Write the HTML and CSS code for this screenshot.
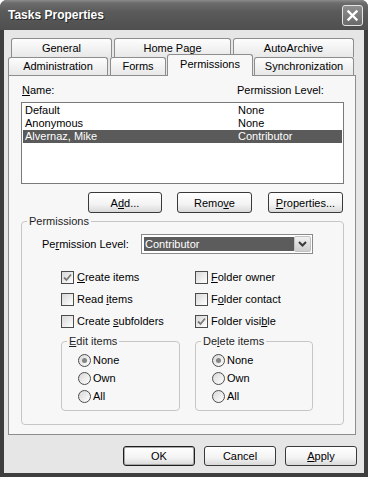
FILE: index.html
```html
<!DOCTYPE html>
<html lang="en">
<head>
    <meta charset="UTF-8">
    <meta name="viewport" content="width=device-width, initial-scale=1.0">
    <title>Tasks Properties</title>
    <link rel="stylesheet" href="styles.css">
</head>
<body>
    <div class="window">
        <div class="titlebar">
            <span class="title">Tasks Properties</span>
            <span class="close-btn">
                <svg width="13" height="13" viewBox="0 0 13 13"><path d="M2.5 2.5 L10.5 10.5 M10.5 2.5 L2.5 10.5" stroke="#fff" stroke-width="2.4" stroke-linecap="square"/></svg>
            </span>
        </div>
        <div class="client">
            <div class="tab-row back-row">
                <div class="tab tab-general">General</div>
                <div class="tab tab-home">Home Page</div>
                <div class="tab tab-archive">AutoArchive</div>
            </div>
            <div class="tab-row front-row">
                <div class="tab tab-admin">Administration</div>
                <div class="tab tab-forms">Forms</div>
                <div class="tab tab-perm selected">Permissions</div>
                <div class="tab tab-sync">Synchronization</div>
            </div>
            <div class="panel">
                <div class="list-header">
                    <span><u>N</u>ame:</span>
                    <span>Permission Level:</span>
                </div>
                <div class="listbox">
                    <div class="list-row"><span>Default</span><span>None</span></div>
                    <div class="list-row"><span>Anonymous</span><span>None</span></div>
                    <div class="list-row selected"><span>Alvernaz, Mike</span><span>Contributor</span></div>
                </div>
                <div class="list-buttons">
                    <button class="btn btn-add">A<u>d</u>d...</button>
                    <button class="btn btn-remove">Remo<u>v</u>e</button>
                    <button class="btn btn-props"><u>P</u>roperties...</button>
                </div>

                <fieldset class="group perms">
                    <legend>Permissions</legend>
                    <div class="level-row">
                        <span class="level-label">Pe<u>r</u>mission Level:</span>
                        <div class="combo">
                            <span class="combo-value">Contributor</span>
                            <span class="combo-arrow">
                                <svg width="9" height="6" viewBox="0 0 9 6"><polyline points="1,1 4.5,4.5 8,1" fill="none" stroke="#3a3a3a" stroke-width="2"/></svg>
                            </span>
                        </div>
                    </div>

                    <div class="check-grid">
                        <div class="check-item">
                            <span class="box"><svg width="9" height="9" viewBox="0 0 9 9"><polyline points="1,4.5 3.5,7 8,1.5" fill="none" stroke="#7a7a7a" stroke-width="1.8"/></svg></span>
                            <span><u>C</u>reate items</span>
                        </div>
                        <div class="check-item">
                            <span class="box"></span>
                            <span><u>F</u>older owner</span>
                        </div>
                        <div class="check-item">
                            <span class="box"></span>
                            <span>Read <u>i</u>tems</span>
                        </div>
                        <div class="check-item">
                            <span class="box"></span>
                            <span>F<u>o</u>lder contact</span>
                        </div>
                        <div class="check-item">
                            <span class="box"></span>
                            <span>Create <u>s</u>ubfolders</span>
                        </div>
                        <div class="check-item">
                            <span class="box"><svg width="9" height="9" viewBox="0 0 9 9"><polyline points="1,4.5 3.5,7 8,1.5" fill="none" stroke="#7a7a7a" stroke-width="1.8"/></svg></span>
                            <span>Folder visi<u>b</u>le</span>
                        </div>
                    </div>

                    <div class="sub-groups">
                        <fieldset class="group sub sub-edit">
                            <legend><u>E</u>dit items</legend>
                            <div class="radios">
                                <div class="radio-item"><span class="radio on"></span><span>None</span></div>
                                <div class="radio-item"><span class="radio"></span><span>Own</span></div>
                                <div class="radio-item"><span class="radio"></span><span>All</span></div>
                            </div>
                        </fieldset>
                        <fieldset class="group sub sub-delete">
                            <legend>De<u>l</u>ete items</legend>
                            <div class="radios">
                                <div class="radio-item"><span class="radio on"></span><span>None</span></div>
                                <div class="radio-item"><span class="radio"></span><span>Own</span></div>
                                <div class="radio-item"><span class="radio"></span><span>All</span></div>
                            </div>
                        </fieldset>
                    </div>
                </fieldset>
            </div>

            <div class="dialog-buttons">
                <button class="btn btn-dlg default">OK</button>
                <button class="btn btn-dlg">Cancel</button>
                <button class="btn btn-dlg"><u>A</u>pply</button>
            </div>
        </div>
    </div>
</body>
</html>
```

FILE: styles.css
```css
* {
    box-sizing: border-box;
}
body {
    margin: 0;
    background: #fff;
    font-family: "Liberation Sans", Arial, sans-serif;
    font-size: 11px;
    color: #000;
}
u {
    text-underline-offset: 1px;
}
.window {
    width: 368px;
    height: 477px;
    background: #3e3e3e;
    border-radius: 7px 7px 0 0;
    overflow: hidden;
    display: flex;
    flex-direction: column;
}
.titlebar {
    height: 30px;
    flex: none;
    display: flex;
    align-items: center;
    justify-content: space-between;
    padding: 0 5px 0 8px;
    background: linear-gradient(#8c8c8c 0, #6c6c6c 3px, #5a5a5a 12px, #4f4f4f 100%);
}
.title {
    color: #fff;
    font-weight: bold;
    font-size: 12px;
    text-shadow: 1px 1px 0 #262626;
}
.close-btn {
    width: 21px;
    height: 21px;
    border: 1px solid #e4e4e4;
    border-radius: 3px;
    background: linear-gradient(#8e8e8e, #6a6a6a);
    display: flex;
    align-items: center;
    justify-content: center;
}
.client {
    flex: 1;
    margin: 0 4px 4px;
    padding-top: 8px;
    background: #e6e6e6;
}

/* tabs */
.tab-row {
    display: flex;
}
.back-row {
    height: 19px;
    padding-left: 7px;
    gap: 2px;
}
.front-row {
    height: 18px;
    padding-left: 4px;
    align-items: flex-end;
}
.tab {
    height: 100%;
    border: 1px solid #8d8d8d;
    border-bottom: none;
    border-radius: 3px 3px 0 0;
    background: linear-gradient(#fdfdfd, #e8e8e8);
    text-align: center;
    line-height: 13px;
    padding-top: 3px;
}
.front-row .tab {
    padding-top: 2px;
}
.tab-general { width: 101px; }
.tab-home { width: 117px; }
.tab-archive { width: 121px; }
.tab-admin { width: 100px; }
.tab-forms { width: 56px; margin-left: 2px; }
.tab-perm { width: 86px; margin-left: 1px; }
.tab-sync { width: 100px; margin-left: 1px; }
.front-row .tab.selected {
    height: 22px;
    margin-bottom: -1px;
    padding-top: 3px;
    background: #f7f7f7;
    position: relative;
    z-index: 1;
}

/* tab page */
.panel {
    margin-left: 4px;
    width: 348px;
    border: 1px solid #8d8d8d;
    background: #f7f7f7;
    padding: 8px 11px 9px 12px;
}
.list-header {
    display: grid;
    grid-template-columns: 215px 1fr;
    padding-left: 1px;
    line-height: 13px;
}
.listbox {
    margin-top: 5px;
    height: 82px;
    border: 1px solid #7a7a7a;
    background: #fff;
    padding: 1px;
}
.list-row {
    display: grid;
    grid-template-columns: 213px 1fr;
    padding-left: 2px;
    height: 13px;
    line-height: 13px;
}
.list-row.selected {
    background: #5a5a5a;
    color: #fff;
}
.list-buttons {
    margin-top: 8px;
    display: flex;
    justify-content: flex-end;
    padding-right: 1px;
}
.btn {
    height: 21px;
    padding: 0;
    border: 1px solid #3a3a3a;
    border-radius: 3px;
    background: linear-gradient(#fff, #f3f3f3 60%, #d9d9d9);
    font-family: inherit;
    font-size: 11px;
    color: #000;
}
.btn-add { width: 74px; }
.btn-remove { width: 75px; margin-left: 15px; }
.btn-props { width: 75px; margin-left: 16px; }

/* group boxes */
.group {
    margin: 0;
    padding: 0;
    min-width: 0;
    border: 1px solid #c6c6c6;
    border-radius: 4px;
}
.group legend {
    margin-left: 5px;
    padding: 0 2px;
    line-height: 13px;
    color: #1e1e1e;
}
.perms {
    margin-top: 2px;
    padding-bottom: 13px;
}
.level-row {
    display: flex;
    align-items: center;
    margin-top: 6px;
    padding-left: 20px;
}
.level-label {
    width: 99px;
}
.combo {
    width: 172px;
    height: 20px;
    border: 1px solid #8a8a8a;
    background: #fff;
    padding: 1px;
    display: flex;
}
.combo-value {
    flex: 1;
    margin: 1px 0 1px 1px;
    padding-left: 1px;
    background: #5c5c5c;
    color: #fff;
    line-height: 14px;
}
.combo-arrow {
    width: 17px;
    border: 1px solid #c2c2c2;
    border-radius: 2px;
    background: linear-gradient(#f0f0f0, #cdcdcd);
    display: flex;
    align-items: center;
    justify-content: center;
}
.check-grid {
    display: grid;
    grid-template-columns: 134px 1fr;
    grid-auto-rows: 22px;
    margin-top: 12px;
    padding-left: 39px;
}
.check-item {
    display: flex;
    align-items: center;
    gap: 3px;
}
.box {
    width: 13px;
    height: 13px;
    border: 1px solid #4c4c4c;
    background: linear-gradient(135deg, #d8d8d8, #fff);
    display: flex;
    align-items: center;
    justify-content: center;
}
.sub-groups {
    display: grid;
    grid-template-columns: 134px 118px;
    margin-top: 3px;
    padding-left: 39px;
}
.sub-edit { width: 119px; }
.sub-delete { width: 118px; }
.radios {
    padding: 3px 0 5px 16px;
}
.radio-item {
    display: flex;
    align-items: center;
    gap: 2px;
    height: 18px;
}
.radio {
    width: 13px;
    height: 13px;
    border: 1px solid #4c4c4c;
    border-radius: 50%;
    background: linear-gradient(135deg, #d8d8d8, #fff);
    display: flex;
    align-items: center;
    justify-content: center;
}
.radio.on::after {
    content: "";
    width: 5px;
    height: 5px;
    border-radius: 50%;
    background: #858585;
}

/* dialog buttons */
.dialog-buttons {
    display: flex;
    justify-content: flex-end;
    gap: 9px;
    margin-top: 11px;
    padding-right: 7px;
}
.btn-dlg {
    width: 72px;
    height: 20px;
}
.btn-dlg.default {
    border-color: #1e1e1e;
    box-shadow: inset 0 0 0 1px #a8a8a8;
}
```
